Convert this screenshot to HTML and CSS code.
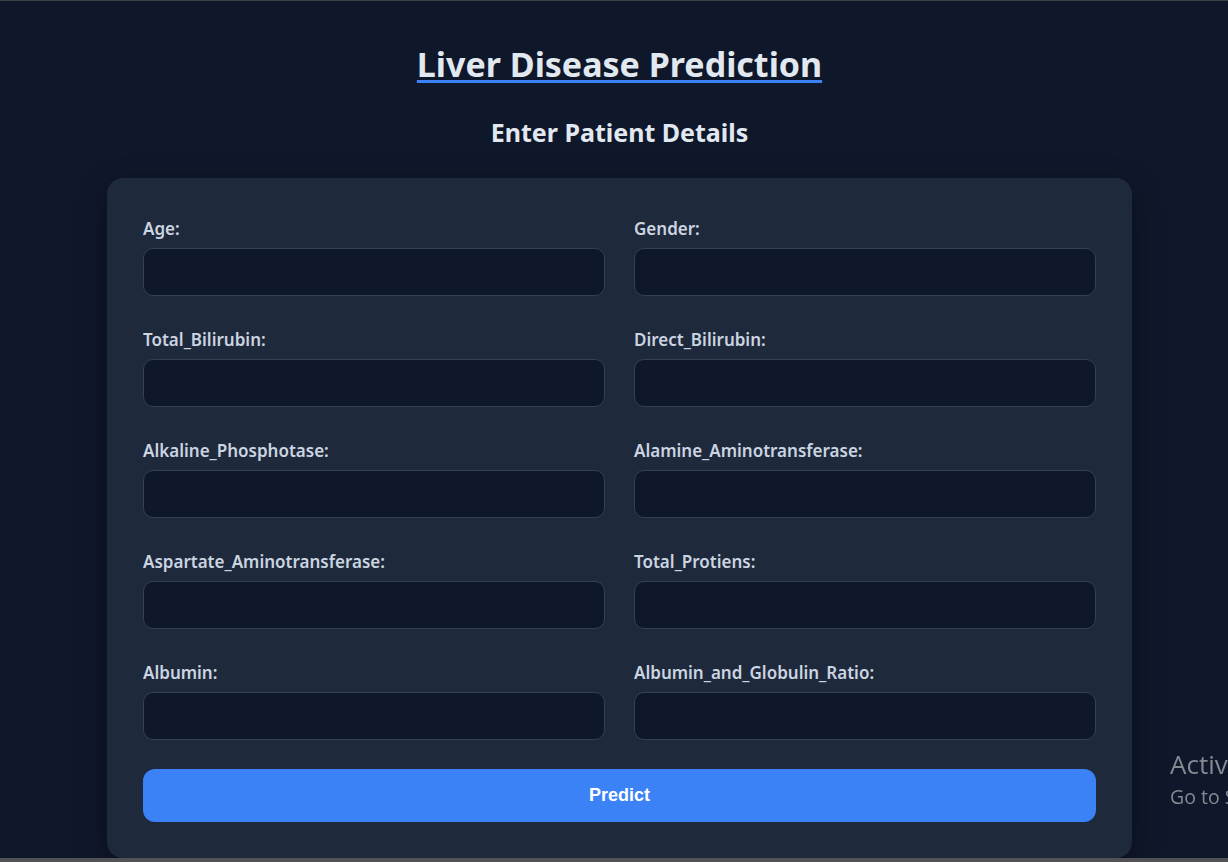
FILE: index.html
```html
<!DOCTYPE html>
<html lang="en">
<head>
<meta charset="utf-8">
<title>Liver Disease Prediction</title>
<link rel="stylesheet" href="styles.css">
</head>
<body>
<main class="page">
  <h1 class="title">Liver Disease Prediction</h1>
  <h2 class="subtitle">Enter Patient Details</h2>
  <form class="card">
    <div class="grid">
      <div class="field"><label>Age:</label><input type="text"></div>
      <div class="field"><label>Gender:</label><input type="text"></div>
      <div class="field"><label>Total_Bilirubin:</label><input type="text"></div>
      <div class="field"><label>Direct_Bilirubin:</label><input type="text"></div>
      <div class="field"><label>Alkaline_Phosphotase:</label><input type="text"></div>
      <div class="field"><label>Alamine_Aminotransferase:</label><input type="text"></div>
      <div class="field"><label>Aspartate_Aminotransferase:</label><input type="text"></div>
      <div class="field"><label>Total_Protiens:</label><input type="text"></div>
      <div class="field"><label>Albumin:</label><input type="text"></div>
      <div class="field"><label>Albumin_and_Globulin_Ratio:</label><input type="text"></div>
    </div>
    <button type="button" class="predict">Predict</button>
  </form>
</main>
<div class="watermark">
  <div class="wm-title">Activate Windows</div>
  <div class="wm-sub">Go to Settings to activate Windows.</div>
</div>
<div class="taskbar-edge"></div>
</body>
</html>
```
FILE: styles.css
```css
html, body {
  margin: 0;
  padding: 0;
  height: 100%;
  overflow: hidden;
}
body {
  background: #0f172a;
  color: #e2e8f0;
  font-family: "Noto Sans", "Open Sans", sans-serif;
  border-top: 1px solid #3a4148;
  box-sizing: border-box;
}
.page {
  display: flex;
  flex-direction: column;
  align-items: center;
  padding-top: 37px;
  padding-left: 11px;
}
.title {
  margin: 0;
  font-size: 34px;
  line-height: 52px;
  font-weight: 700;
  color: #e2e8f0;
  text-decoration: underline;
  text-decoration-color: #3b82f6;
  text-decoration-thickness: 3px;
  text-underline-offset: 3px;
}
.subtitle {
  margin: 25px 0 0;
  font-size: 25px;
  line-height: 34px;
  font-weight: 700;
  color: #e2e8f0;
}
.card {
  margin-top: 29px;
  width: 1025px;
  box-sizing: border-box;
  padding: 36px;
  background: #1e293b;
  border-radius: 16px;
  box-shadow: 0 10px 30px rgba(0, 0, 0, 0.35);
  display: flex;
  flex-direction: column;
  gap: 29px;
}
.grid {
  display: grid;
  grid-template-columns: 1fr 1fr;
  column-gap: 29px;
  row-gap: 29px;
}
.field {
  display: flex;
  flex-direction: column;
}
.field label {
  font-size: 17px;
  line-height: 24px;
  padding-top: 3px;
  font-weight: 600;
  color: #cbd5e1;
  margin-bottom: 7px;
}
.field input {
  height: 48px;
  box-sizing: border-box;
  background: #0f172a;
  border: 1px solid #334155;
  border-radius: 10px;
  color: #e2e8f0;
  padding: 0 14px;
  font-size: 16px;
  outline: none;
}
.predict {
  height: 53px;
  border: none;
  border-radius: 12px;
  background: #3b82f6;
  color: #ffffff;
  font-family: "Liberation Sans", Arial, sans-serif;
  font-weight: 700;
  font-size: 18px;
}
.watermark {
  position: fixed;
  left: 1170px;
  top: 746px;
  white-space: nowrap;
  color: #858a92;
  font-family: "Open Sans", "Noto Sans", sans-serif;
}
.wm-title {
  font-size: 26px;
  line-height: 36px;
}
.wm-sub {
  font-size: 19.5px;
  line-height: 30px;
}
.taskbar-edge {
  position: fixed;
  left: 0;
  right: 0;
  bottom: 0;
  height: 4px;
  background: #505255;
}
```
